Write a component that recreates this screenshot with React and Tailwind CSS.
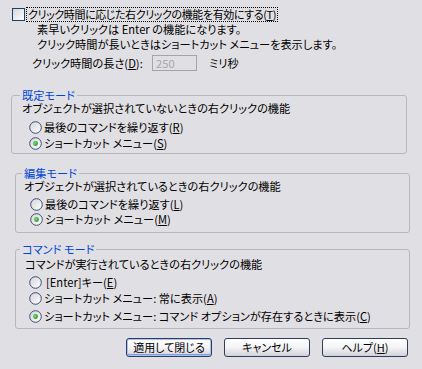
import React from "react";

const U = ({ c }) => <span className="underline underline-offset-[1px]">{c}</span>;

function Radio({ checked }) {
  return (
    <svg width="13" height="13" viewBox="0 0 13 13" className="shrink-0">
      <defs>
        <linearGradient id="rg" x1="0" y1="0" x2="1" y2="1">
          <stop offset="0" stopColor="#d4d3d8" />
          <stop offset="1" stopColor="#ffffff" />
        </linearGradient>
        <radialGradient id="gd" cx="0.4" cy="0.4" r="0.6">
          <stop offset="0" stopColor="#7be37b" />
          <stop offset="1" stopColor="#1e9a1e" />
        </radialGradient>
      </defs>
      <circle cx="6.5" cy="6.5" r="5.8" fill="url(#rg)" stroke="#3b4e72" strokeWidth="1" />
      {checked && <circle cx="6.5" cy="6.5" r="2.4" fill="url(#gd)" />}
    </svg>
  );
}

function Row({ checked, children, cls }) {
  return (
    <div className={"flex items-center h-[14px] leading-[14px] " + cls}>
      <Radio checked={checked} />
      <span className="ml-[2px] whitespace-nowrap">{children}</span>
    </div>
  );
}

function Btn({ children, def }) {
  return (
    <button
      className={
        "w-[86px] h-[19px] rounded-[3px] border border-[#2f3d5c] bg-gradient-to-b from-white via-[#f4f4f6] to-[#d2d1da] text-[11px] leading-[15px] text-black flex items-center justify-center " +
        (def ? "shadow-[inset_0_0_0_1px_#a9c3ee,inset_0_-1px_0_1px_#7d9fd8]" : "")
      }
    >
      {children}
    </button>
  );
}

export default function App() {
  return (
    <div className="w-[422px] h-[369px] bg-[#e0dfe3] text-black text-[11.2px] font-['Noto_Sans_CJK_JP','Noto_Sans',sans-serif] [font-feature-settings:'palt'] pt-[7px] overflow-hidden">
      <div className="flex items-center h-[15px] pl-[12px]">
        <div className="w-[13px] h-[13px] border border-[#1c3f6e] bg-gradient-to-br from-[#d6d5da] to-white shrink-0" />
        <span className="ml-[1px] border border-dotted border-black px-[1px] leading-[13px] whitespace-nowrap text-[11px] tracking-[-0.4px]">
          クリック時間に応じた右クリックの機能を有効にする(<U c="T" />)
        </span>
      </div>
      <div className="pl-[37px] leading-[15px] whitespace-nowrap">
        <div>素早いクリックは Enter の機能になります。</div>
        <div>クリック時間が長いときはショートカット メニューを表示します。</div>
      </div>
      <div className="flex items-center h-[16px] mt-[3px] pl-[32px] whitespace-nowrap">
        <span className="w-[120px]">クリック時間の長さ(<U c="D" />):</span>
        <div className="w-[45px] h-[16px] border border-[#a5a4a9] bg-[#e0dfe3] text-[#a9a8ac] pl-[3px] leading-[14px]">250</div>
        <span className="ml-[12px]">ミリ秒</span>
      </div>

      <fieldset className="ml-[11px] w-[396px] mt-[18px] border border-[#b8b7bd] rounded-[3px] pb-[3px]">
        <legend className="ml-[8px] px-[2px] leading-[12px] text-[#0046d5]">既定モード</legend>
        <div className="mt-[1px] pl-[10px] leading-[13px]">オブジェクトが選択されていないときの右クリックの機能</div>
        <Row cls="mt-[5px] pl-[17px]">最後のコマンドを繰り返す(<U c="R" />)</Row>
        <Row cls="mt-[2px] pl-[17px]" checked>ショートカット メニュー(<U c="S" />)</Row>
      </fieldset>

      <fieldset className="ml-[15px] w-[395px] mt-[13px] border border-[#b8b7bd] rounded-[3px] pb-[6px]">
        <legend className="ml-[6px] px-[2px] leading-[12px] text-[#0046d5]">編集モード</legend>
        <div className="mt-[1px] pl-[8px] leading-[13px]">オブジェクトが選択されているときの右クリックの機能</div>
        <Row cls="mt-[4px] pl-[14px]">最後のコマンドを繰り返す(<U c="L" />)</Row>
        <Row cls="mt-[1px] pl-[14px]" checked>ショートカット メニュー(<U c="M" />)</Row>
      </fieldset>

      <fieldset className="ml-[15px] w-[395px] mt-[10px] border border-[#b8b7bd] rounded-[3px] pb-[5px]">
        <legend className="ml-[4px] px-[2px] leading-[12px] text-[#0046d5]">コマンド モード</legend>
        <div className="mt-[3px] pl-[9px] leading-[13px]">コマンドが実行されているときの右クリックの機能</div>
        <Row cls="mt-[4px] pl-[13px]"><span className="ml-[2px]">[Enter]キー(<U c="E" />)</span></Row>
        <Row cls="mt-[2px] pl-[13px]">ショートカット メニュー: 常に表示(<U c="A" />)</Row>
        <Row cls="mt-[4px] pl-[13px]" checked>ショートカット メニュー: コマンド オプションが存在するときに表示(<U c="C" />)</Row>
      </fieldset>

      <div className="flex gap-[12px] pl-[126px] mt-[9px]">
        <Btn def>適用して閉じる</Btn>
        <Btn>キャンセル</Btn>
        <Btn>ヘルプ(<U c="H" />)</Btn>
      </div>
    </div>
  );
}
